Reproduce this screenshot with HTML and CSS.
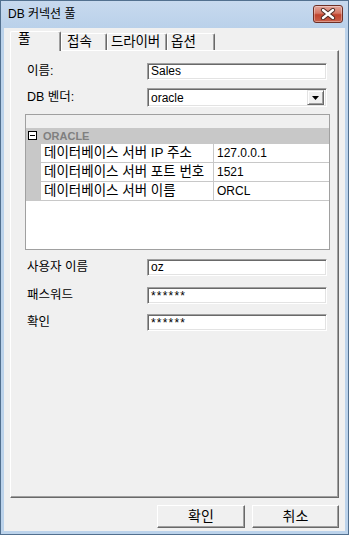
FILE: index.html
```html
<!DOCTYPE html>
<html>
<head>
    <meta charset="UTF-8">
    <title>DB 커넥션 풀</title>
    <link rel="stylesheet" href="styles.css">
</head>
<body>
    <div class="window">
        <div class="titlebar">
            <span class="title">DB 커넥션 풀</span>
            <div class="close">
                <svg width="16" height="12" viewBox="0 0 16 12">
                    <path d="M3 2 L13 10 M13 2 L3 10" stroke="#4a2a24" stroke-width="4.2" stroke-linecap="round"/>
                    <path d="M3 2 L13 10 M13 2 L3 10" stroke="#ffffff" stroke-width="2.4" stroke-linecap="round"/>
                </svg>
            </div>
        </div>

        <div class="client">
            <div class="tabs">
                <div class="tab selected tab-pool">풀</div>
                <div class="tab tab-conn">접속</div>
                <div class="tab tab-driver">드라이버</div>
                <div class="tab tab-opt">옵션</div>
            </div>

            <div class="panel">
                <div class="row row-name">
                    <span class="label">이름:</span>
                    <div class="edit">Sales</div>
                </div>
                <div class="row row-vendor">
                    <span class="label">DB 벤더:</span>
                    <div class="combo">
                        <span class="combo-text">oracle</span>
                        <span class="drop">
                            <svg width="7" height="4" viewBox="0 0 7 4"><path d="M0 0 H7 L3.5 4 Z" fill="#000"/></svg>
                        </span>
                    </div>
                </div>

                <div class="grid">
                    <div class="grid-top"></div>
                    <div class="cat">
                        <span class="toggle"></span>
                        <span class="cat-name">ORACLE</span>
                    </div>
                    <div class="prop">
                        <span class="gutter"></span>
                        <span class="pname">데이터베이스 서버 IP 주소</span>
                        <span class="pvalue">127.0.0.1</span>
                    </div>
                    <div class="prop">
                        <span class="gutter"></span>
                        <span class="pname">데이터베이스 서버 포트 번호</span>
                        <span class="pvalue">1521</span>
                    </div>
                    <div class="prop">
                        <span class="gutter"></span>
                        <span class="pname">데이터베이스 서버 이름</span>
                        <span class="pvalue">ORCL</span>
                    </div>
                </div>

                <div class="row row-user">
                    <span class="label">사용자 이름</span>
                    <div class="edit">oz</div>
                </div>
                <div class="row row-pw">
                    <span class="label">패스워드</span>
                    <div class="edit stars">******</div>
                </div>
                <div class="row row-confirm">
                    <span class="label">확인</span>
                    <div class="edit stars">******</div>
                </div>
            </div>

            <div class="buttons">
                <div class="button btn-ok">확인</div>
                <div class="button btn-cancel">취소</div>
            </div>
        </div>
    </div>
</body>
</html>
```

FILE: styles.css
```css
body {
    margin: 0;
    font-family: "Liberation Sans", "Noto Sans CJK KR", sans-serif;
    font-size: 12px;
    color: #000;
    background: #b9d1ea;
}

.window {
    width: 349px;
    height: 535px;
    box-sizing: border-box;
    border: 1px solid #52708f;
    background: #bcd3eb;
    display: flex;
    flex-direction: column;
    overflow: hidden;
}

/* title bar */
.titlebar {
    height: 27px;
    flex: none;
    display: flex;
    align-items: flex-start;
    padding: 0 5px 0 7px;
    background: linear-gradient(#c7d9ee, #bad1ea);
}

.title {
    font-size: 12px;
    line-height: 27px;
}

.close {
    margin-left: auto;
    margin-top: 4px;
    width: 28px;
    height: 16px;
    border: 1px solid #6e2f25;
    border-radius: 3px;
    background: linear-gradient(#e2a69b, #d47664 45%, #c0432d 55%, #c9604a);
    display: flex;
    align-items: center;
    justify-content: center;
    box-shadow: inset 0 0 0 1px rgba(255, 255, 255, 0.35);
}

/* client area */
.client {
    flex: 1;
    margin: 0 3px 3px 3px;
    background: #f0f0f0;
    padding: 3px 6px 3px 6px;
    display: flex;
    flex-direction: column;
}

.tabs {
    height: 19px;
    display: flex;
    align-items: flex-end;
    position: relative;
    z-index: 1;
    font-size: 13.5px;
}

.tab {
    box-sizing: border-box;
    height: 17px;
    line-height: 15px;
    padding-left: 5px;
    background: #f0f0f0;
    border-top: 1px solid #fff;
    border-left: 1px solid #fff;
    border-right: 1px solid #696969;
    box-shadow: inset -1px 0 #a0a0a0;
    border-radius: 2px 2px 0 0;
    white-space: nowrap;
}

.tab.selected {
    height: 20px;
    margin-bottom: -1px;
    padding-left: 7px;
    line-height: 14px;
}

.tab-pool { width: 51px; }
.tab-conn { width: 46px; }
.tab-driver { width: 60px; padding-left: 3px; letter-spacing: -0.2px; }
.tab-opt { width: 48px; padding-left: 3px; }

.panel {
    flex: 1;
    border-top: 1px solid #fff;
    border-left: 1px solid #fff;
    border-right: 1px solid #696969;
    border-bottom: 1px solid #696969;
    box-shadow: inset -1px -1px #a0a0a0;
    padding: 12px 11px 0 16px;
}

.row {
    display: flex;
    align-items: center;
    justify-content: space-between;
}

.row-vendor { margin-top: 8px; }
.row-user { margin-top: 9px; }
.row-pw { margin-top: 11px; }
.row-confirm { margin-top: 10px; }

.label {
    font-size: 12.5px;
    line-height: 14px;
    margin-top: -2px;
}

.edit {
    box-sizing: border-box;
    width: 180px;
    height: 17px;
    background: #fff;
    border-top: 1px solid #a0a0a0;
    border-left: 1px solid #a0a0a0;
    border-right: 1px solid #fff;
    border-bottom: 1px solid #fff;
    box-shadow: inset 1px 1px #696969, inset -1px -1px #e3e3e3;
    padding-left: 3px;
    line-height: 15px;
}

.edit.stars {
    letter-spacing: 1.2px;
    line-height: 17px;
}

.combo {
    box-sizing: border-box;
    width: 180px;
    height: 19px;
    background: #fff;
    border-top: 1px solid #a0a0a0;
    border-left: 1px solid #a0a0a0;
    border-right: 1px solid #fff;
    border-bottom: 1px solid #fff;
    box-shadow: inset 1px 1px #696969, inset -1px -1px #e3e3e3;
    padding: 2px 2px 2px 3px;
    display: flex;
    align-items: center;
}

.combo-text {
    flex: 1;
    line-height: 14px;
}

.drop {
    box-sizing: border-box;
    width: 17px;
    height: 15px;
    background: #f0f0f0;
    border-top: 1px solid #e3e3e3;
    border-left: 1px solid #e3e3e3;
    border-right: 1px solid #696969;
    border-bottom: 1px solid #696969;
    box-shadow: inset 1px 1px #fff, inset -1px -1px #a0a0a0;
    display: flex;
    align-items: center;
    justify-content: center;
}

/* property grid */
.grid {
    margin: 7px -3px 0 -2px;
    height: 136px;
    box-sizing: border-box;
    border: 1px solid #a0a0a0;
    background: #fff;
}

.grid-top {
    height: 13px;
    background: #f0f0f0;
}

.cat {
    height: 15px;
    background: #c8c8c8;
    display: flex;
    align-items: center;
}

.toggle {
    box-sizing: border-box;
    width: 9px;
    height: 9px;
    margin-left: 2px;
    border: 1px solid #000;
    background: #fff;
    position: relative;
}

.toggle::after {
    content: "";
    position: absolute;
    left: 1px;
    top: 3px;
    width: 5px;
    height: 1px;
    background: #000;
}

.cat-name {
    margin-left: 6px;
    font-weight: bold;
    font-size: 11px;
    color: #808080;
    line-height: 14px;
}

.prop {
    height: 18px;
    display: flex;
    border-top: 1px solid #c8c8c8;
}

.gutter {
    width: 15px;
    background: #c8c8c8;
}

.pname {
    width: 173px;
    padding-left: 3px;
    box-sizing: border-box;
    border-right: 1px solid #c8c8c8;
    font-size: 13.5px;
    line-height: 18px;
    white-space: nowrap;
}

.pvalue {
    flex: 1;
    padding-left: 3px;
    line-height: 18px;
}

.prop:last-child {
    border-bottom: 1px solid #c8c8c8;
}

/* buttons */
.buttons {
    margin-top: 7px;
    display: flex;
    justify-content: flex-end;
    gap: 7px;
}

.button {
    box-sizing: border-box;
    height: 23px;
    background: #f0f0f0;
    border-top: 1px solid #fff;
    border-left: 1px solid #fff;
    border-right: 1px solid #696969;
    border-bottom: 1px solid #696969;
    box-shadow: inset -1px -1px #a0a0a0;
    text-align: center;
    font-size: 14px;
    line-height: 20px;
}

.btn-ok { width: 88px; }
.btn-cancel { width: 87px; }
```
